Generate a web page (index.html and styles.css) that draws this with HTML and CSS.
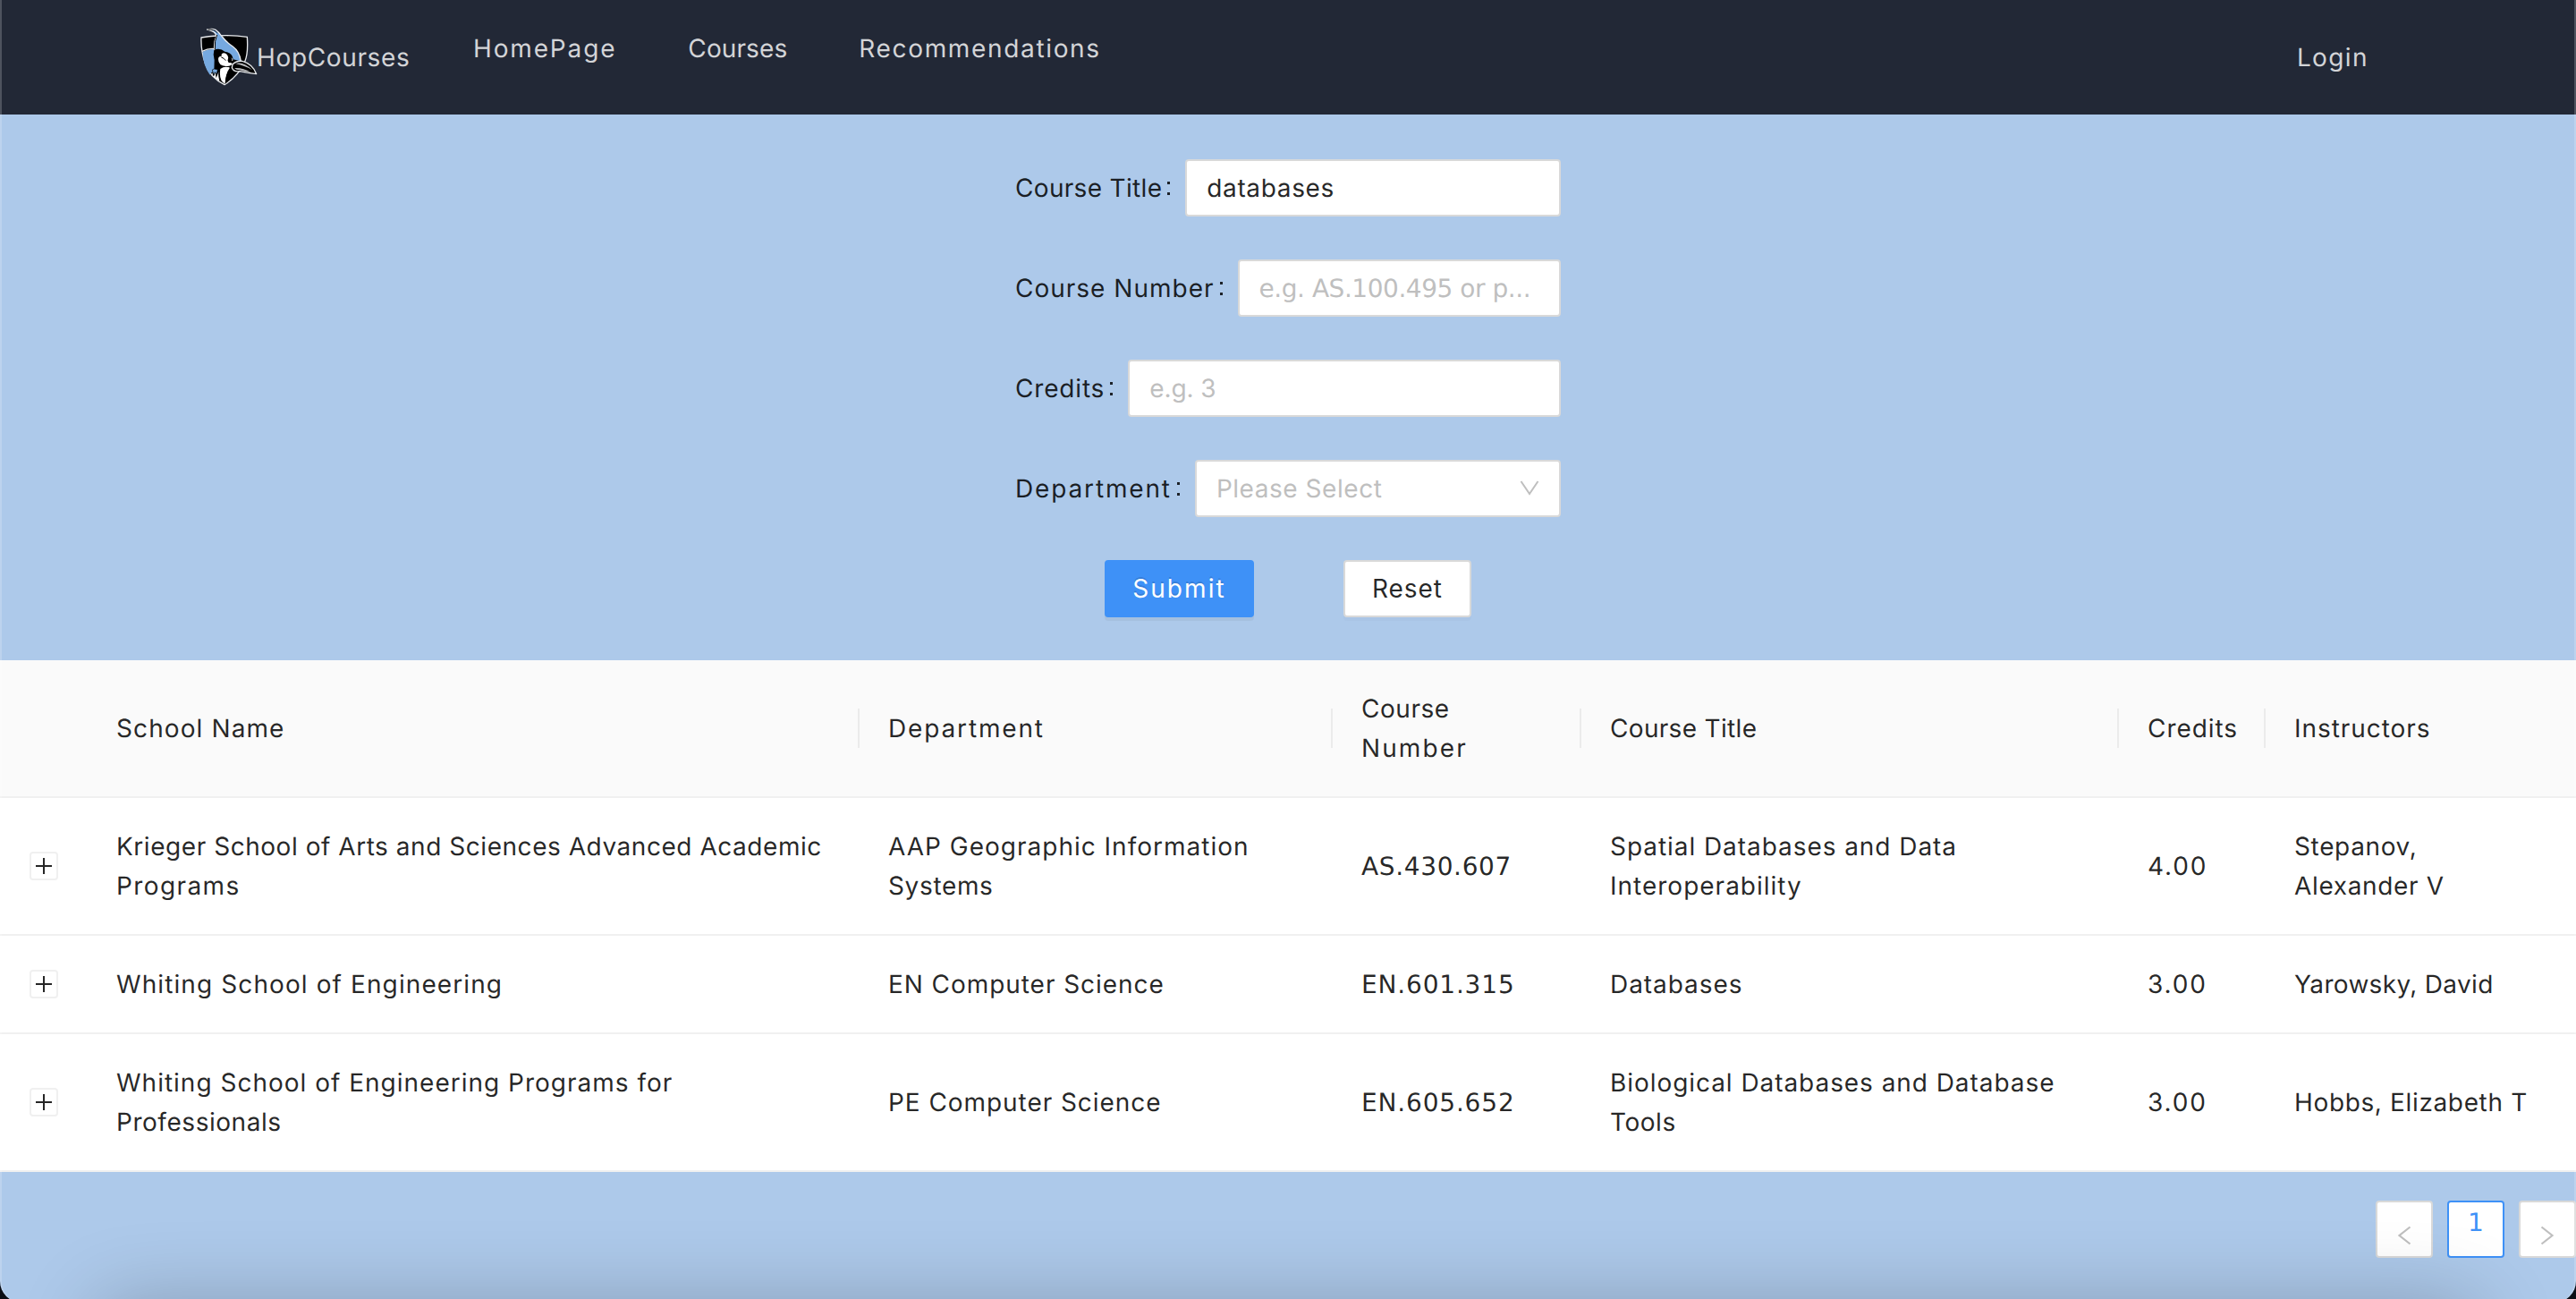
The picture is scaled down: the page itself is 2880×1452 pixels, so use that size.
FILE: index.html
```html
<!DOCTYPE html>
<html lang="en">
<head>
<meta charset="utf-8">
<title>HopCourses</title>
<link rel="stylesheet" href="styles.css">
</head>
<body>
<div class="window">
  <header class="header">
    <a class="brand">
      <svg class="logo" viewBox="66 64 198 198">
        <path d="M75 97Q100 92 128 91Q180 88 229 95Q233 150 221 178Q198 228 153 255Q104 230 89 186Q73 140 75 97Z" fill="#000" stroke="#e9ebee" stroke-width="4"/>
        <path d="M80 144Q98 134 120 136L118 212Q108 211 104 222Q80 188 80 144Z" fill="#76a9e0"/>
        <path d="M78 143Q100 132 121 135" fill="none" stroke="#e9ebee" stroke-width="4"/>
        <path d="M95 70Q112 66 123 71Q135 79 145 94Q162 115 181 127Q203 143 208 176L172 180Q165 150 145 147L119 138Q117 110 126 92Q122 74 95 70Z" fill="#76a9e0" stroke="#e9ebee" stroke-width="4" stroke-linejoin="round"/>
        <path d="M97 70Q119 68 130 82M128 88Q119 107 121 137" fill="none" stroke="#000" stroke-width="3"/>
        <path d="M118 138Q139 131 154 144Q180 147 182 170L205 176L180 202L146 200Q119 187 116 155Z" fill="#000"/>
        <path d="M132 169Q133 158 143 160Q141 149 151 149Q164 150 166 167Q168 180 180 185Q174 194 157 193Q132 191 132 169Z" fill="#fff"/>
        <path d="M142 163Q151 165 157 174" fill="none" stroke="#000" stroke-width="3"/>
        <ellipse cx="171" cy="173" rx="7" ry="9"/>
        <path d="M176 166Q182 168 179 175" fill="none" stroke="#fff" stroke-width="2.5"/>
        <path d="M139 202Q154 191 171 198Q156 218 155 252Q133 243 139 202Z" fill="#fff"/>
        <path d="M111 213L116 228L122 214L125 233L134 211L136 243Q119 234 110 220Z" fill="#fff"/>
        <path d="M118 202L130 204L127 220L121 213L117 224L112 205Z" fill="#76a9e0" stroke="#000" stroke-width="2"/>
        <path d="M136 202Q131 229 139 243M174 202Q158 218 157 251" fill="none" stroke="#000" stroke-width="3"/>
        <path d="M180 187Q192 174 213 176Q248 186 260 219Q233 216 204 210Q184 213 178 198Z" fill="#000" stroke="#e9ebee" stroke-width="4" stroke-linejoin="round"/>
        <path d="M190 185Q205 179 222 188Q236 195 246 206Q224 192 190 185ZM186 199Q213 197 242 213Q220 211 204 206Q192 206 186 199Z" fill="#b9babd"/>
      </svg>
      <span class="brand-name t-06">HopCourses</span>
    </a>
    <nav class="nav">
      <a class="t-18">HomePage</a>
      <a class="t-01">Courses</a>
      <a class="t-16">Recommendations</a>
    </nav>
    <a class="login t-14">Login</a>
  </header>

  <form class="search">
    <div class="field">
      <label class="label t-03">Course Title</label><i class="colon"></i>
      <div class="control value t-06">databases</div>
    </div>
    <div class="field">
      <label class="label t-10">Course Number</label><i class="colon"></i>
      <div class="control code t-n04">e.g. AS.100.495 or p...</div>
    </div>
    <div class="field">
      <label class="label t-08">Credits</label><i class="colon"></i>
      <div class="control t-00">e.g. 3</div>
    </div>
    <div class="field">
      <label class="label t-18">Department</label><i class="colon"></i>
      <div class="control select t-05">Please Select
        <svg class="chevron" viewBox="0 0 22 18"><path d="M1.5 1L11 15L20.500 1" /></svg>
      </div>
    </div>
    <div class="actions">
      <button type="button" class="btn primary t-20">Submit</button>
      <button type="button" class="btn t-09">Reset</button>
    </div>
  </form>

  <table class="courses">
    <colgroup><col class="c-expand"><col class="c-school"><col class="c-dept"><col class="c-number"><col class="c-title"><col class="c-credits"><col></colgroup>
    <thead>
      <tr>
        <th></th>
        <th class="split t-11">School Name</th>
        <th class="split t-18">Department</th>
        <th class="split"><span class="t-05">Course</span><br><span class="t-20">Number</span></th>
        <th class="split t-03">Course Title</th>
        <th class="split t-09">Credits</th>
        <th class="t-09">Instructors</th>
      </tr>
    </thead>
    <tbody>
      <tr>
        <td class="expand"><span class="plus"></span></td>
        <td><span class="t-05">Krieger School of Arts and Sciences Advanced Academic</span><br><span class="t-14">Programs</span></td>
        <td><span class="t-10">AAP Geographic Information</span><br><span class="t-06">Systems</span></td>
        <td class="code t-06">AS.430.607</td>
        <td><span class="t-09">Spatial Databases and Data</span><br><span class="t-10">Interoperability</span></td>
        <td class="t-18">4.00</td>
        <td><span class="t-06">Stepanov,</span><br><span class="t-06">Alexander V</span></td>
      </tr>
      <tr>
        <td class="expand"><span class="plus"></span></td>
        <td class="t-11">Whiting School of Engineering</td>
        <td class="t-09">EN Computer Science</td>
        <td class="code t-08">EN.601.315</td>
        <td class="t-09">Databases</td>
        <td class="t-18">3.00</td>
        <td class="t-03">Yarowsky, David</td>
      </tr>
      <tr>
        <td class="expand"><span class="plus"></span></td>
        <td><span class="t-10">Whiting School of Engineering Programs for</span><br><span class="t-05">Professionals</span></td>
        <td class="t-09">PE Computer Science</td>
        <td class="code t-08">EN.605.652</td>
        <td><span class="t-09">Biological Databases and Database</span><br><span class="t-05">Tools</span></td>
        <td class="t-18">3.00</td>
        <td class="t-06">Hobbs, Elizabeth T</td>
      </tr>
    </tbody>
  </table>

  <div class="pagination">
    <a class="page arrow"><svg viewBox="0 0 16 22"><path d="M14.500 1.500L2.500 11L14.500 20.500"/></svg></a>
    <a class="page current">1</a>
    <a class="page arrow"><svg viewBox="0 0 16 22"><path d="M1.500 1.500L13.500 11L1.500 20.500"/></svg></a>
  </div>
  <div class="bottom-shade"></div>
</div>
</body>
</html>
```
FILE: styles.css
```css
* { box-sizing: border-box; }
html { background: #0b0e15; overflow: hidden; }
body {
  margin: 0;
  height: 1452px;
  overflow: hidden;
  font: 28px/44px Inter, "Liberation Sans", sans-serif;
  color: rgba(0, 0, 0, .85);
  text-rendering: geometricPrecision;
}
.window {
  position: relative;
  height: 1456px;
  overflow: hidden;
  border-radius: 0 0 24px 24px;
  background: #adc9ea;
}
.window::after {
  content: "";
  position: absolute;
  inset: 0;
  border: solid rgba(255, 255, 255, .2);
  border-width: 0 2px;
  border-radius: 0 0 24px 24px;
}

/* letter spacing steps */
.t-n04 { letter-spacing: -.46px; }
.t-00 { letter-spacing: -.1px; }
.t-01 { letter-spacing: .1px; }
.t-03 { letter-spacing: .32px; }
.t-05 { letter-spacing: .54px; }
.t-06 { letter-spacing: .64px; }
.t-08 { letter-spacing: .82px; }
.t-09 { letter-spacing: .94px; }
.t-10 { letter-spacing: 1px; }
.t-11 { letter-spacing: 1.1px; }
.t-14 { letter-spacing: 1.4px; }
.t-16 { letter-spacing: 1.66px; }
.t-18 { letter-spacing: 1.85px; }
.t-20 { letter-spacing: 2.1px; }

/* header */
.header {
  display: flex;
  align-items: center;
  height: 128px;
  padding: 0 232px 0 222px;
  background: #222836;
  color: #d3d4d7;
}
.brand { display: flex; align-items: center; width: 307px; }
.logo { width: 66px; height: 66px; flex: none; }
.brand-name { margin-left: -1px; }
.nav { display: flex; gap: 80px; flex: 1; padding-bottom: 20px; }

/* search form */
.search {
  display: flex;
  flex-direction: column;
  gap: 48px;
  width: 610px;
  margin: 0 auto;
  padding-top: 50px;
  height: 610px;
}
.field { display: flex; align-items: center; height: 64px; }
.label { white-space: nowrap; }
.colon {
  flex: none;
  width: 3px;
  height: 15px;
  margin: 1px 17px 0 6px;
  border: solid #1d2229;
  border-width: 3px 0;
}
.control {
  position: relative;
  flex: 1;
  height: 64px;
  padding: 8px 22px;
  border: 2px solid #d9d9d9;
  border-radius: 4px;
  background: #fff;
  color: #bfbfbf;
  white-space: nowrap;
}
.value { color: rgba(0, 0, 0, .85); }
.select { display: flex; align-items: center; justify-content: space-between; }
.chevron { width: 22px; height: 18px; fill: none; stroke: #bfbfbf; stroke-width: 2; }
.actions { display: flex; justify-content: center; gap: 100px; }
.btn {
  height: 64px;
  width: 143px;
  padding: 0;
  border: 2px solid #d9d9d9;
  border-radius: 4px;
  background: #fff;
  color: rgba(0, 0, 0, .85);
  font-family: inherit;
  font-size: 28px;
  line-height: 44px;
  box-shadow: 0 4px 0 rgba(0, 0, 0, .015);
}
.primary {
  width: 167px;
  border-color: #3e91f7;
  background: #3e91f7;
  color: #fff;
  text-shadow: 0 -2px 0 rgba(0, 0, 0, .12);
  box-shadow: 0 4px 0 rgba(0, 0, 0, .045);
}

/* results table */
.courses {
  width: 100%;
  table-layout: fixed;
  border-collapse: separate;
  border-spacing: 0;
  background: #fff;
}
.c-expand { width: 98px; }
.c-school { width: 863px; }
.c-dept { width: 529px; }
.c-number { width: 278px; }
.c-title { width: 601px; }
.c-credits { width: 164px; }
.courses th, .courses td {
  padding: 32px 0 32px 32px;
  border-bottom: 2px solid #f0f0f0;
  font-weight: 400;
  text-align: left;
  vertical-align: middle;
  white-space: nowrap;
}
.courses th { background: #fafafa; }
.courses .split {
  background: linear-gradient(#ebebeb, #ebebeb) right center / 2px 44px no-repeat #fafafa;
}
.courses .expand { padding: 0 0 0 33px; }
.code { font-family: "DejaVu Sans", sans-serif; }
.courses .code { padding: 33px 0 31px 32px; }
.control.code { padding-top: 9px; }
.plus {
  display: block;
  width: 32px;
  height: 32px;
  border: 2px solid #f0f0f0;
  border-radius: 4px;
  background:
    linear-gradient(#262626, #262626) center / 18px 2px no-repeat,
    linear-gradient(#262626, #262626) center / 2px 18px no-repeat;
}

/* pagination */
.pagination { display: flex; justify-content: flex-end; gap: 16px; padding-top: 32px; }
.page {
  display: flex;
  justify-content: center;
  width: 64px;
  height: 64px;
  border: 2px solid #d9d9d9;
  border-radius: 4px;
  background: #fff;
}
.current { padding-top: 1px; border-color: #3e91f7; color: #3e91f7; font-family: "DejaVu Sans", sans-serif; }
.arrow { align-items: center; padding-top: 14px; }
.arrow svg { width: 16px; height: 22px; fill: none; stroke: #bfbfbf; stroke-width: 2.2; }

.bottom-shade {
  position: absolute;
  left: 110px;
  right: 110px;
  top: 1456px;
  height: 200px;
  border-radius: 20px;
  box-shadow: 0 0 90px rgba(0, 0, 0, .23);
}
```
